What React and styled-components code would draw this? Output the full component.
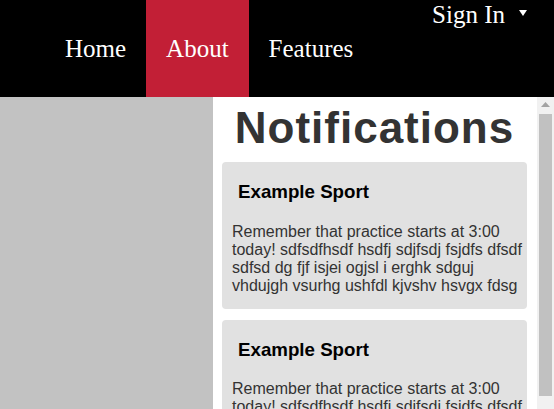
import React from "react";
import styled, { createGlobalStyle } from "styled-components";

const notifications = [
  {
    title: "Example Sport",
    body: "Remember that practice starts at 3:00 today! sdfsdfhsdf hsdfj sdjfsdj fsjdfs dfsdf sdfsd dg fjf isjei ogjsl i erghk sdguj vhdujgh vsurhg ushfdl kjvshv hsvgx fdsg",
  },
  {
    title: "Example Sport",
    body: "Remember that practice starts at 3:00 today! sdfsdfhsdf hsdfj sdjfsdj fsjdfs dfsdf sdfsd dg fjf isjei ogjsl i erghk sdguj vhdujgh vsurhg ushfdl kjvshv hsvgx fdsg",
  },
];

const links = ["Home", "About", "Features"];

function App() {
  return (
    <>
      <GlobalStyle />
      <Page>
        <Header>
          <Nav>
            {links.map((l) => (
              <NavItem key={l} $active={l === "About"}>{l}</NavItem>
            ))}
          </Nav>
          <Account>
            Sign In
            <Caret />
          </Account>
        </Header>
        <Main>
          <Content />
          <Panel>
            <PanelBody>
              <PanelTitle>Notifications</PanelTitle>
              {notifications.map((n, i) => (
                <Card key={i}>
                  <CardTitle>{n.title}</CardTitle>
                  <CardText>{n.body}</CardText>
                </Card>
              ))}
            </PanelBody>
            <ScrollRail>
              <ScrollButton>
                <svg width="9" height="5" viewBox="0 0 9 5">
                  <path d="M0 5 L4.5 0 L9 5 Z" fill="#a3a3a3" />
                </svg>
              </ScrollButton>
              <ScrollThumb />
            </ScrollRail>
          </Panel>
        </Main>
      </Page>
    </>
  );
}

const GlobalStyle = createGlobalStyle`
  html, body {
    margin: 0;
    padding: 0;
    overflow: hidden;
  }
  body {
    font-family: "Liberation Serif", "Times New Roman", serif;
  }
`;

const Page = styled.div`
  display: flex;
  flex-direction: column;
  height: 100vh;
`;

const Header = styled.header`
  display: flex;
  height: 97px;
  background: #000;
  color: #fff;
  flex-shrink: 0;
`;

const Nav = styled.nav`
  display: flex;
  padding-left: 45px;
`;

const NavItem = styled.a`
  display: flex;
  align-items: center;
  padding: 0 20px;
  font-size: 25px;
  color: #fff;
  background: ${(p) => (p.$active ? "#c21f36" : "transparent")};
  cursor: pointer;
`;

const Account = styled.div`
  display: flex;
  align-items: center;
  align-self: flex-start;
  margin-left: auto;
  margin-right: 27px;
  padding-top: 1px;
  font-size: 25px;
  cursor: pointer;
`;

const Caret = styled.span`
  width: 0;
  height: 0;
  margin-left: 14px;
  margin-bottom: 4px;
  border-left: 4px solid transparent;
  border-right: 4px solid transparent;
  border-top: 6px solid #fff;
`;

const Main = styled.main`
  display: flex;
  flex: 1;
  min-height: 0;
  background: #c2c2c2;
`;

const Content = styled.div`
  flex: 1;
`;

const Panel = styled.aside`
  display: flex;
  width: 341px;
  flex-shrink: 0;
  background: #fff;
  font-family: "Liberation Sans", Arial, sans-serif;
`;

const PanelBody = styled.div`
  flex: 1;
  min-width: 0;
  overflow: hidden;
  padding: 0 10px 10px 9px;
`;

const ScrollRail = styled.div`
  display: flex;
  flex-direction: column;
  width: 17px;
  flex-shrink: 0;
  background: #f1f1f1;
`;

const ScrollButton = styled.div`
  display: flex;
  justify-content: center;
  align-items: center;
  height: 17px;
  flex-shrink: 0;
  svg {
    margin-top: -2px;
  }
`;

const ScrollThumb = styled.div`
  height: 282px;
  margin: 0 2px;
  background: #c1c1c1;
  flex-shrink: 0;
`;

const PanelTitle = styled.h1`
  margin: 6px 0 9px;
  text-align: center;
  font-size: 44px;
  font-weight: bold;
  letter-spacing: 1px;
  color: #333;
`;

const Card = styled.div`
  background: #e1e1e1;
  border-radius: 4px;
  padding: 1px 4px 1px 10px;
  margin-bottom: 11px;
`;

const CardTitle = styled.h3`
  margin: 18px 0 0 6px;
  font-size: 18.72px;
  font-weight: bold;
  color: #000;
`;

const CardText = styled.p`
  margin: 19.5px 0 13px;
  font-size: 16px;
  color: #333;
`;

export default App;
